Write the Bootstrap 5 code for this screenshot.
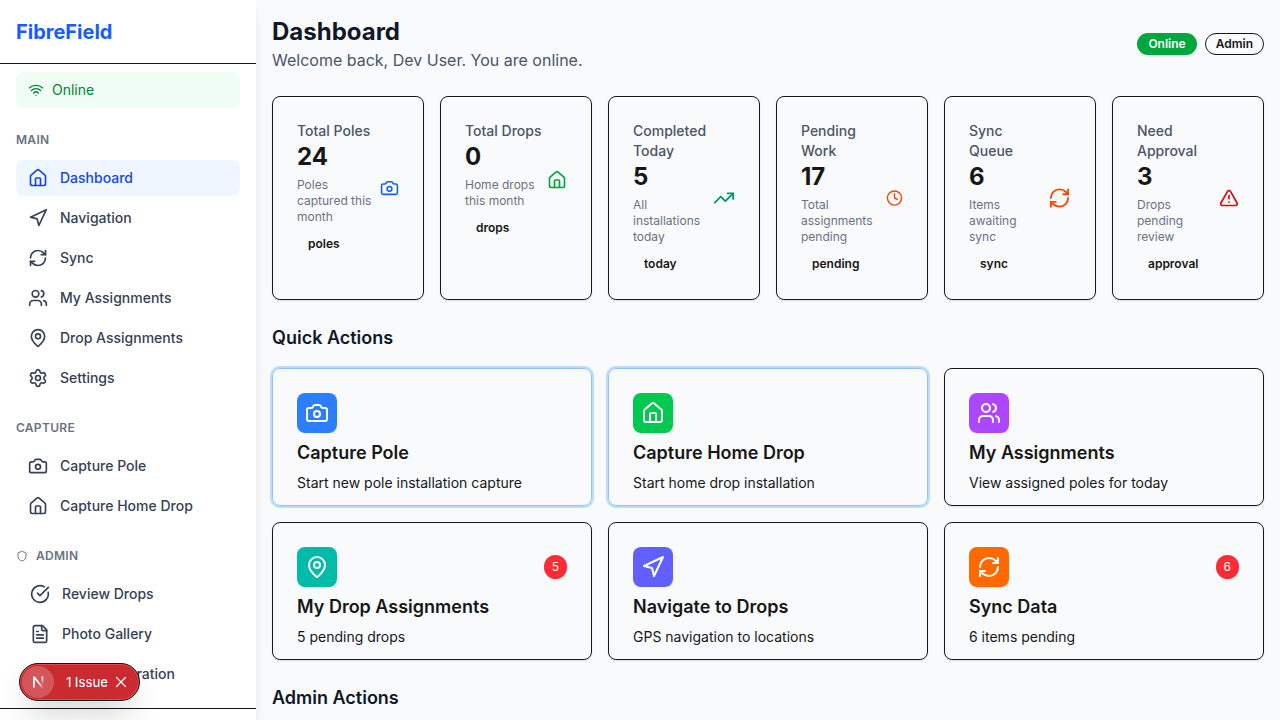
<!DOCTYPE html>
<html lang="en">
<head>
<meta charset="utf-8">
<meta name="viewport" content="width=device-width, initial-scale=1">
<title>FibreField</title>
<link href="https://cdn.jsdelivr.net/npm/bootstrap@5.3.0/dist/css/bootstrap.min.css" rel="stylesheet">
<style>
  body { font-family: Inter, "Liberation Sans", sans-serif; background: #f9fafc; color: #171717; }
  svg { fill: none; stroke: currentColor; stroke-width: 2; stroke-linecap: round; stroke-linejoin: round; flex-shrink: 0; }
  h1, h2, h3, p { margin: 0; }

  .side { width: 256px; background: #fff; box-shadow: 0 10px 15px -3px rgba(0,0,0,.1), 0 4px 6px -4px rgba(0,0,0,.1); }
  .side-top { height: 64px; border-bottom: 1px solid #171717; }
  .brand { font-size: 20px; line-height: 28px; font-weight: 700; color: #155dfc; }
  .status { background: #f0fdf4; color: #008236; border-radius: 8px; font-size: 14px; line-height: 20px; }
  .side-label { font-size: 12px; line-height: 16px; font-weight: 600; color: #6a7282; letter-spacing: .025em; margin-bottom: 12px; }
  .side .nav-link { display: flex; align-items: center; gap: 12px; padding: 8px 12px; border-radius: 8px; font-size: 14px; line-height: 20px; font-weight: 500; color: #364153; }
  .side .nav-link.active { background: #eff6ff; color: #1447e6; }
  .side .nav-admin .nav-link { padding-left: 14px; }
  .side-foot { border-top: 1px solid #171717; }

  .page-title { font-size: 24px; line-height: 32px; font-weight: 700; color: #101828; }
  .page-sub { font-size: 16px; line-height: 24px; color: #4a5565; }
  .section-title { font-size: 18px; line-height: 28px; font-weight: 600; color: #101828; margin: 24px 0 16px; }
  .chip { display: inline-block; border: 1px solid transparent; border-radius: 11px; padding: 2px 10px; font-size: 12px; line-height: 16px; font-weight: 600; }
  .chip-on { background: #00a63e; color: #fff; }
  .chip-line { border-color: #171717; }

  .tile { height: 100%; border: 1px solid #171717; border-radius: 8px; box-shadow: 0 1px 2px rgba(0,0,0,.1); color: #171717; }
  .stat-text { flex: 1 1 0; display: flex; flex-direction: column; align-items: flex-start; padding-right: 4px; }
  .stat-name { font-size: 14px; line-height: 20px; font-weight: 500; color: #4a5565; }
  .stat-num { font-size: 24px; line-height: 32px; font-weight: 700; }
  .stat-note { font-size: 12px; line-height: 16px; color: #6a7282; }
  .action { display: block; padding: 24px 24px 12px; text-decoration: none; }
  .action-hot { border-color: #8ec5ff; box-shadow: 0 0 0 2px #bedbff; }
  .swatch { width: 40px; height: 40px; border-radius: 8px; color: #fff; }
  .count { background: #fb2c36; color: #fff; border-radius: 12px; padding: 4px 8px; font-size: 12px; line-height: 16px; }
  .action h3 { font-size: 18px; line-height: 28px; font-weight: 600; margin: 6px 0; }
  .action p { font-size: 14px; line-height: 20px; }

  .c-blue { color: #155dfc; } .c-green { color: #00a63e; } .c-emerald { color: #009966; }
  .c-orange { color: #f54900; } .c-red { color: #e7000b; }
  .b-blue { background: #2b7fff; } .b-green { background: #00c950; } .b-purple { background: #ad46ff; }
  .b-teal { background: #00bba7; } .b-indigo { background: #615fff; } .b-orange { background: #ff6900; }

  .issue { left: 19px; bottom: 19px; height: 38px; padding: 0 11px 0 2px; border: 1px solid #171717; border-radius: 19px; background: #ca2a30; color: #fff; font-size: 13px; line-height: 16px; font-weight: 500;
    box-shadow: inset 0 0 0 1px #e5484d, 0 16px 32px -8px rgba(0,0,0,.24); z-index: 1030; }
  .issue-logo { width: 32px; height: 32px; border-radius: 50%; background: #d4555a; margin-right: 12px; }
  .issue button { background: none; border: 0; padding: 0; color: inherit; display: flex; margin-left: 6px; }
</style>
</head>
<body>
<svg width="0" height="0" class="position-absolute" aria-hidden="true">
  <symbol id="house" viewBox="0 0 24 24"><path d="M15 21v-8a1 1 0 0 0-1-1h-4a1 1 0 0 0-1 1v8"/><path d="M3 10a2 2 0 0 1 .709-1.528l7-5.999a2 2 0 0 1 2.582 0l7 5.999A2 2 0 0 1 21 10v9a2 2 0 0 1-2 2H5a2 2 0 0 1-2-2z"/></symbol>
  <symbol id="nav" viewBox="0 0 24 24"><path d="M3 11 22 2l-9 19-2-8-8-2z"/></symbol>
  <symbol id="sync" viewBox="0 0 24 24"><path d="M3 12a9 9 0 0 1 9-9 9.75 9.75 0 0 1 6.74 2.74L21 8"/><path d="M21 3v5h-5"/><path d="M21 12a9 9 0 0 1-9 9 9.75 9.75 0 0 1-6.74-2.74L3 16"/><path d="M8 16H3v5"/></symbol>
  <symbol id="users" viewBox="0 0 24 24"><path d="M16 21v-2a4 4 0 0 0-4-4H6a4 4 0 0 0-4 4v2"/><path d="M16 3.128a4 4 0 0 1 0 7.744"/><path d="M22 21v-2a4 4 0 0 0-3-3.87"/><circle cx="9" cy="7" r="4"/></symbol>
  <symbol id="pin" viewBox="0 0 24 24"><path d="M20 10c0 4.993-5.539 10.193-7.399 11.799a1 1 0 0 1-1.202 0C9.539 20.193 4 14.993 4 10a8 8 0 0 1 16 0"/><circle cx="12" cy="10" r="3"/></symbol>
  <symbol id="gear" viewBox="0 0 24 24"><path d="M9.671 4.136a2.34 2.34 0 0 1 4.659 0 2.34 2.34 0 0 0 3.319 1.915 2.34 2.34 0 0 1 2.33 4.033 2.34 2.34 0 0 0 0 3.831 2.34 2.34 0 0 1-2.33 4.033 2.34 2.34 0 0 0-3.319 1.915 2.34 2.34 0 0 1-4.659 0 2.34 2.34 0 0 0-3.32-1.915 2.34 2.34 0 0 1-2.33-4.033 2.34 2.34 0 0 0 0-3.831A2.34 2.34 0 0 1 6.35 6.051a2.34 2.34 0 0 0 3.319-1.915"/><circle cx="12" cy="12" r="3"/></symbol>
  <symbol id="camera" viewBox="0 0 24 24"><path d="M13.997 4a2 2 0 0 1 1.76 1.05l.486.9A2 2 0 0 0 18.003 7H20a2 2 0 0 1 2 2v9a2 2 0 0 1-2 2H4a2 2 0 0 1-2-2V9a2 2 0 0 1 2-2h1.997a2 2 0 0 0 1.759-1.048l.489-.904A2 2 0 0 1 10.004 4z"/><circle cx="12" cy="13" r="3"/></symbol>
  <symbol id="shield" viewBox="0 0 24 24"><path d="M20 13c0 5-3.5 7.5-7.66 8.95a1 1 0 0 1-.67-.01C7.5 20.5 4 18 4 13V6a1 1 0 0 1 1-1c2 0 4.500-1.200 6.240-2.720a1.170 1.170 0 0 1 1.520 0C14.510 3.810 17 5 19 5a1 1 0 0 1 1 1z"/></symbol>
  <symbol id="check" viewBox="0 0 24 24"><path d="M21.801 10A10 10 0 1 1 17 3.335"/><path d="m9 11 3 3L22 4"/></symbol>
  <symbol id="file" viewBox="0 0 24 24"><path d="M15 2H6a2 2 0 0 0-2 2v16a2 2 0 0 0 2 2h12a2 2 0 0 0 2-2V7Z"/><path d="M14 2v4a2 2 0 0 0 2 2h4M10 9H8M16 13H8M16 17H8"/></symbol>
  <symbol id="wifi" viewBox="0 0 24 24"><path d="M12 20h.01M2 8.820a15 15 0 0 1 20 0M5 12.859a10 10 0 0 1 14 0M8.500 16.429a5 5 0 0 1 7 0"/></symbol>
  <symbol id="trend" viewBox="0 0 24 24"><path d="M16 7h6v6"/><path d="m22 7-8.500 8.500-5-5L2 17"/></symbol>
  <symbol id="clock" viewBox="0 0 24 24"><circle cx="12" cy="12" r="10"/><path d="M12 6v6l4 2"/></symbol>
  <symbol id="alert" viewBox="0 0 24 24"><path d="m21.730 18-8-14a2 2 0 0 0-3.480 0l-8 14A2 2 0 0 0 4 21h16a2 2 0 0 0 1.730-3M12 9v4M12 17h.01"/></symbol>
</svg>

<div class="d-flex align-items-start">
  <aside class="side sticky-top vh-100 overflow-hidden flex-shrink-0 d-flex flex-column">
    <div class="side-top d-flex align-items-center px-3 flex-shrink-0"><span class="brand">FibreField</span></div>
    <div class="px-3 pt-2 pb-4">
      <div class="status d-flex align-items-center gap-2 p-2"><svg class="ms-1" width="16" height="16"><use href="#wifi"/></svg>Online</div>
    </div>
    <nav class="px-3 pb-3 d-flex flex-column gap-4">
      <section>
        <h2 class="side-label">MAIN</h2>
        <div class="nav flex-column gap-1">
          <a class="nav-link active" href="#"><svg width="20" height="20"><use href="#house"/></svg>Dashboard</a>
          <a class="nav-link" href="#"><svg width="20" height="20"><use href="#nav"/></svg>Navigation</a>
          <a class="nav-link" href="#"><svg width="20" height="20"><use href="#sync"/></svg>Sync</a>
          <a class="nav-link" href="#"><svg width="20" height="20"><use href="#users"/></svg>My Assignments</a>
          <a class="nav-link" href="#"><svg width="20" height="20"><use href="#pin"/></svg>Drop Assignments</a>
          <a class="nav-link" href="#"><svg width="20" height="20"><use href="#gear"/></svg>Settings</a>
        </div>
      </section>
      <section>
        <h2 class="side-label">CAPTURE</h2>
        <div class="nav flex-column gap-1">
          <a class="nav-link" href="#"><svg width="20" height="20"><use href="#camera"/></svg>Capture Pole</a>
          <a class="nav-link" href="#"><svg width="20" height="20"><use href="#house"/></svg>Capture Home Drop</a>
        </div>
      </section>
      <section>
        <h2 class="side-label d-flex align-items-center gap-2"><svg width="12" height="12"><use href="#shield"/></svg>ADMIN</h2>
        <div class="nav nav-admin flex-column gap-1">
          <a class="nav-link" href="#"><svg width="20" height="20"><use href="#check"/></svg>Review Drops</a>
          <a class="nav-link" href="#"><svg width="20" height="20"><use href="#file"/></svg>Photo Gallery</a>
          <a class="nav-link" href="#"><svg width="20" height="20"><use href="#gear"/></svg>Pole Registration</a>
        </div>
      </section>
    </nav>
    <div class="side-foot p-3"></div>
  </aside>

  <main class="flex-grow-1 p-3 pb-0">
    <header class="d-flex align-items-center justify-content-between mb-4">
      <div>
        <h1 class="page-title">Dashboard</h1>
        <p class="page-sub">Welcome back, Dev User. You are online.</p>
      </div>
      <div class="d-flex gap-2"><span class="chip chip-on">Online</span><span class="chip chip-line">Admin</span></div>
    </header>

    <div class="row row-cols-6 g-3">
      <div class="col"><div class="tile p-4"><div class="d-flex align-items-center">
        <div class="stat-text"><p class="stat-name">Total Poles</p><p class="stat-num">24</p><p class="stat-note mt-1 mb-2">Poles captured this month</p><span class="chip">poles</span></div>
        <svg class="c-blue" width="19" height="24"><use href="#camera"/></svg></div></div></div>
      <div class="col"><div class="tile p-4"><div class="d-flex align-items-center">
        <div class="stat-text"><p class="stat-name">Total Drops</p><p class="stat-num">0</p><p class="stat-note mt-1 mb-2">Home drops this month</p><span class="chip">drops</span></div>
        <svg class="c-green" width="20" height="24"><use href="#house"/></svg></div></div></div>
      <div class="col"><div class="tile p-4"><div class="d-flex align-items-center">
        <div class="stat-text"><p class="stat-name">Completed Today</p><p class="stat-num">5</p><p class="stat-note mt-1 mb-2">All installations today</p><span class="chip">today</span></div>
        <svg class="c-emerald" width="22" height="24"><use href="#trend"/></svg></div></div></div>
      <div class="col"><div class="tile p-4"><div class="d-flex align-items-center">
        <div class="stat-text"><p class="stat-name">Pending Work</p><p class="stat-num">17</p><p class="stat-note mt-1 mb-2">Total assignments pending</p><span class="chip">pending</span></div>
        <svg class="c-orange" width="17" height="24"><use href="#clock"/></svg></div></div></div>
      <div class="col"><div class="tile p-4"><div class="d-flex align-items-center">
        <div class="stat-text"><p class="stat-name">Sync Queue</p><p class="stat-num">6</p><p class="stat-note mt-1 mb-2">Items awaiting sync</p><span class="chip">sync</span></div>
        <svg class="c-orange" width="23" height="24"><use href="#sync"/></svg></div></div></div>
      <div class="col"><div class="tile p-4"><div class="d-flex align-items-center">
        <div class="stat-text"><p class="stat-name">Need Approval</p><p class="stat-num">3</p><p class="stat-note mt-1 mb-2">Drops pending review</p><span class="chip">approval</span></div>
        <svg class="c-red" width="20" height="24"><use href="#alert"/></svg></div></div></div>
    </div>

    <h2 class="section-title">Quick Actions</h2>
    <div class="row row-cols-3 g-3">
      <div class="col"><a class="tile action action-hot" href="#">
        <span class="swatch b-blue d-flex align-items-center justify-content-center"><svg width="24" height="24"><use href="#camera"/></svg></span>
        <h3>Capture Pole</h3><p>Start new pole installation capture</p></a></div>
      <div class="col"><a class="tile action action-hot" href="#">
        <span class="swatch b-green d-flex align-items-center justify-content-center"><svg width="24" height="24"><use href="#house"/></svg></span>
        <h3>Capture Home Drop</h3><p>Start home drop installation</p></a></div>
      <div class="col"><a class="tile action" href="#">
        <span class="swatch b-purple d-flex align-items-center justify-content-center"><svg width="24" height="24"><use href="#users"/></svg></span>
        <h3>My Assignments</h3><p>View assigned poles for today</p></a></div>
      <div class="col"><a class="tile action" href="#">
        <span class="d-flex align-items-center justify-content-between"><span class="swatch b-teal d-flex align-items-center justify-content-center"><svg width="24" height="24"><use href="#pin"/></svg></span><span class="count">5</span></span>
        <h3>My Drop Assignments</h3><p>5 pending drops</p></a></div>
      <div class="col"><a class="tile action" href="#">
        <span class="swatch b-indigo d-flex align-items-center justify-content-center"><svg width="24" height="24"><use href="#nav"/></svg></span>
        <h3>Navigate to Drops</h3><p>GPS navigation to locations</p></a></div>
      <div class="col"><a class="tile action" href="#">
        <span class="d-flex align-items-center justify-content-between"><span class="swatch b-orange d-flex align-items-center justify-content-center"><svg width="24" height="24"><use href="#sync"/></svg></span><span class="count">6</span></span>
        <h3>Sync Data</h3><p>6 items pending</p></a></div>
    </div>
    <h2 class="section-title mb-0">Admin Actions</h2>
  </main>
</div>

<div class="issue position-fixed d-flex align-items-center">
  <span class="issue-logo d-flex align-items-center justify-content-center">
    <svg width="14" height="14" viewBox="0 0 14 14"><defs><linearGradient id="fade" x1="0" y1="0" x2="0" y2="1"><stop offset="0" stop-color="#fff"/><stop offset="1" stop-color="#fff" stop-opacity="0"/></linearGradient><linearGradient id="leg" gradientUnits="userSpaceOnUse" x1="7" y1="8" x2="12" y2="14"><stop offset="0" stop-color="#fff"/><stop offset="1" stop-color="#fff" stop-opacity="0"/></linearGradient></defs><path d="M2 12.500V1.500h1.800L13 13l-1.500 1L3.800 4.200v8.300z" fill="#fff" stroke="none" style="fill:url(#leg)"/><path d="M10.500 1.500h1.800v8h-1.800z" fill="url(#fade)" stroke="none"/></svg>
  </span>
  <span>1 Issue</span>
  <button type="button" aria-label="Close"><svg width="14" height="14" viewBox="0 0 14 14"><path d="m2.500 2.500 9 9M11.500 2.500l-9 9" stroke-width="1.200"/></svg></button>
</div>
<script src="https://cdn.jsdelivr.net/npm/bootstrap@5.3.0/dist/js/bootstrap.bundle.min.js"></script>
</body>
</html>
